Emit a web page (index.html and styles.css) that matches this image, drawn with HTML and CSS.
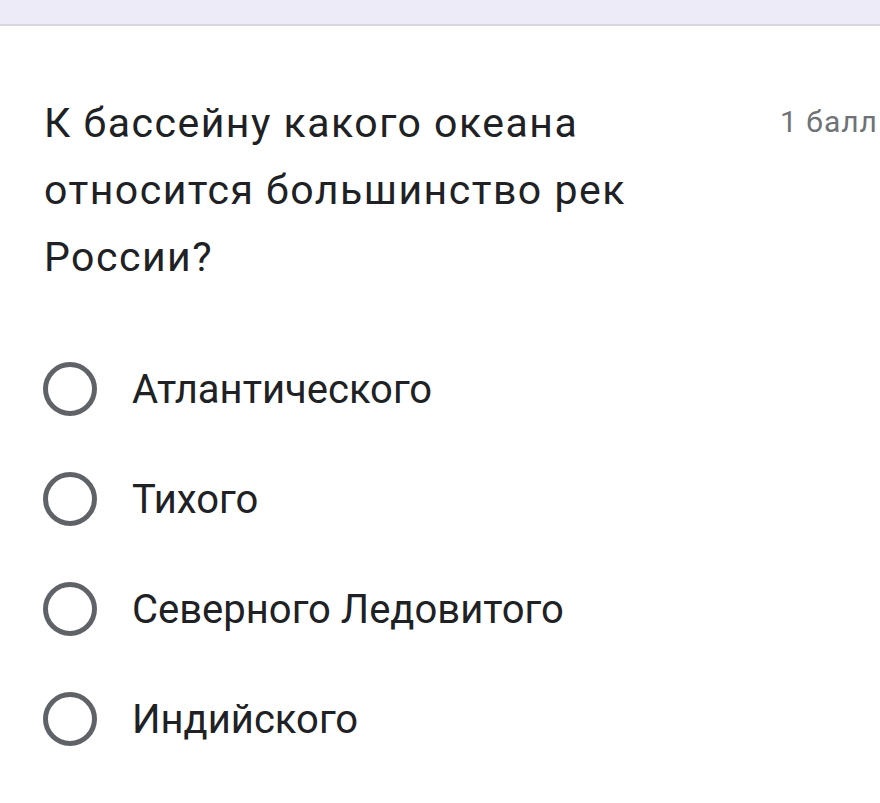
FILE: index.html
```html
<!DOCTYPE html>
<html lang="ru">
<head>
  <meta charset="UTF-8" />
  <meta name="viewport" content="width=device-width, initial-scale=1.0" />
  <title>Вопрос</title>
  <link rel="stylesheet" href="styles.css">
</head>
<body>
  <div class="topbar"></div>
  <div class="card">
    <div class="question-row">
      <div class="question">К бассейну какого океана относится большинство рек России?</div>
      <div class="points">1 балл</div>
    </div>
    <div class="options">
      <label class="option"><span class="radio"></span><span class="option-text">Атлантического</span></label>
      <label class="option"><span class="radio"></span><span class="option-text">Тихого</span></label>
      <label class="option"><span class="radio"></span><span class="option-text">Северного Ледовитого</span></label>
      <label class="option"><span class="radio"></span><span class="option-text">Индийского</span></label>
    </div>
  </div>
</body>
</html>
```

FILE: styles.css
```css
body {
  margin: 0;
  background-color: #fff;
  color: #202124;
  font-family: Roboto, 'Noto Sans', sans-serif;
  overflow: hidden;
}
.topbar {
  height: 24px;
  background-color: #eeebf8;
  border-bottom: 2px solid #d9d7de;
}
.card {
  padding: 64px 0 0 44px;
}
.question-row {
  display: flex;
  align-items: flex-start;
}
.question {
  flex: 0 0 650px;
  font-size: 41px;
  line-height: 67px;
  letter-spacing: 1.5px;
}
.points {
  flex-shrink: 0;
  margin-left: 86px;
  margin-top: 14px;
  font-size: 30px;
  line-height: 36px;
  letter-spacing: 1px;
  color: #6f7276;
  white-space: nowrap;
}
.options {
  margin-top: 43px;
}
.option {
  display: flex;
  align-items: center;
  height: 110px;
  cursor: pointer;
}
.radio {
  flex-shrink: 0;
  width: 44px;
  height: 44px;
  border: 5px solid #5f6368;
  border-radius: 50%;
  margin-left: -1px;
}
.option-text {
  margin-left: 35px;
  font-size: 40px;
}
```
